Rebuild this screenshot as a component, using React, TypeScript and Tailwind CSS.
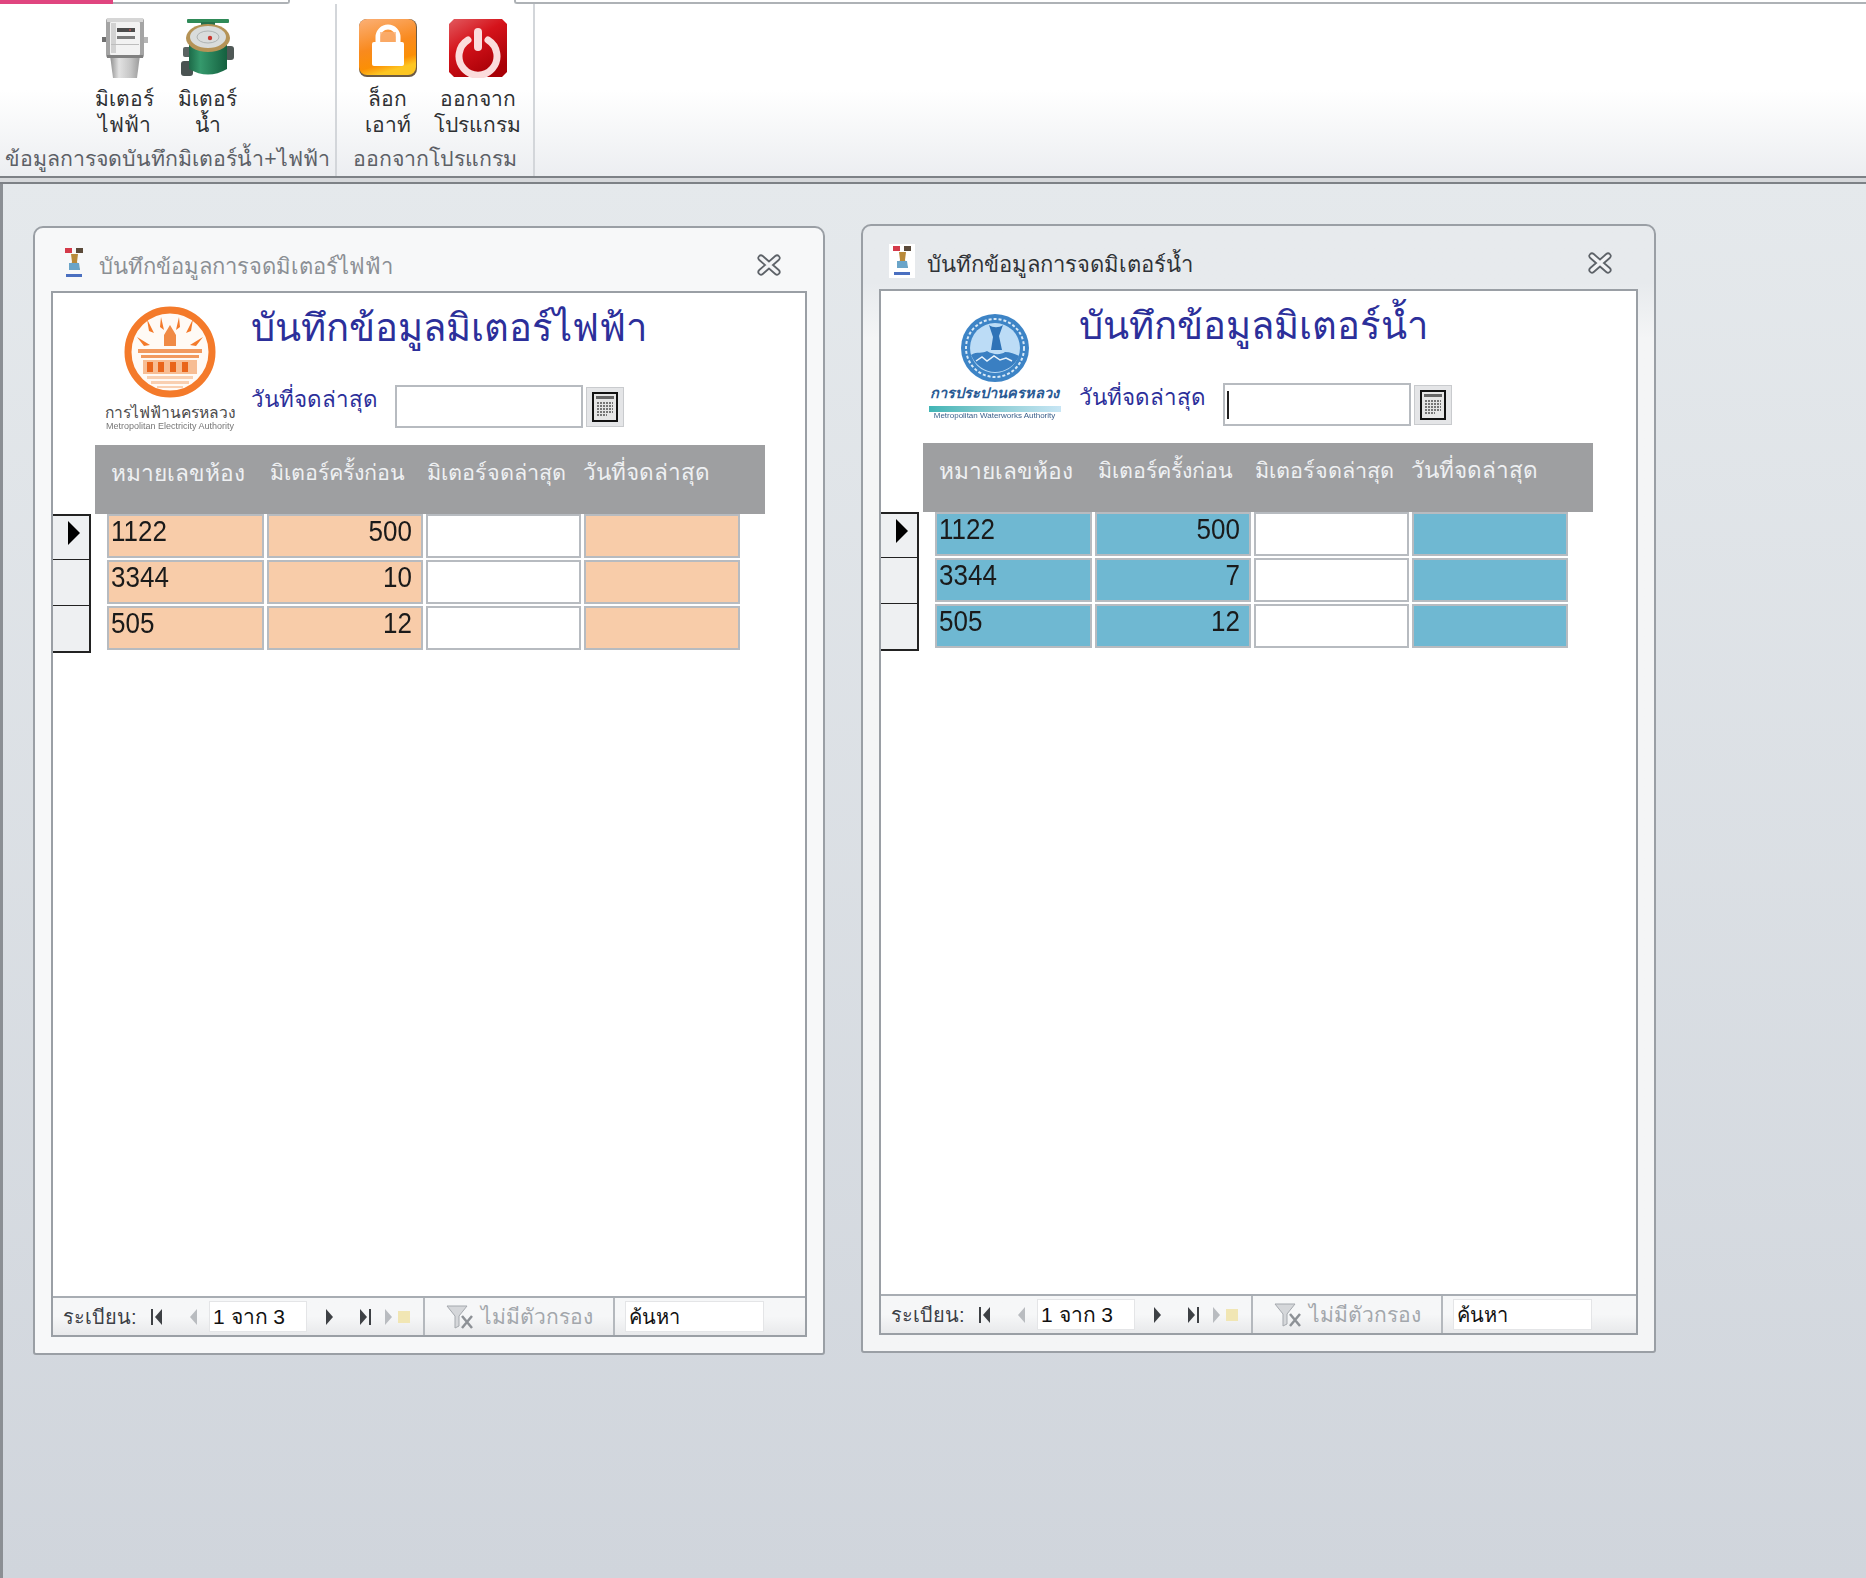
import type { ReactNode } from "react";

type MeterRow = { room: string; previous: string };

function ElectricMeterIcon() {
  return (
    <svg width="46" height="62" viewBox="0 0 46 62" className="blur-[0.7px]">
      <defs>
        <linearGradient id="meterBase" x1="0" y1="0" x2="1" y2="0">
          <stop offset="0" stopColor="#8f8f8f" />
          <stop offset="0.3" stopColor="#e2e2e2" />
          <stop offset="0.7" stopColor="#c4c4c4" />
          <stop offset="1" stopColor="#9a9a9a" />
        </linearGradient>
      </defs>
      <rect x="0" y="20" width="5" height="5" fill="#6f6f6f" />
      <rect x="41" y="20" width="5" height="6" fill="#b5b5b5" />
      <path d="M8 38h30l-3 23H11z" fill="url(#meterBase)" />
      <rect x="4" y="1" width="38" height="40" rx="3" fill="#a4a4a4" />
      <rect x="5" y="1" width="36" height="4" fill="#d6d6d6" />
      <rect x="8" y="5" width="30" height="33" rx="1" fill="#f2f2f2" />
      <rect x="9" y="6" width="5" height="30" fill="#d2d2d2" />
      <rect x="15" y="11" width="18" height="4" fill="#4c4c4c" />
      <rect x="15" y="19" width="18" height="3" fill="#7a7a7a" />
      <circle cx="28" cy="13" r="1" fill="#b55" />
      <rect x="9" y="27" width="28" height="1" fill="#bdbdbd" />
      <rect x="5" y="38" width="36" height="3" fill="#808080" />
    </svg>
  );
}

function WaterMeterIcon() {
  return (
    <svg width="54" height="60" viewBox="0 0 54 60" className="blur-[0.7px]">
      <defs>
        <linearGradient id="waterBody" x1="0" y1="0" x2="1" y2="0">
          <stop offset="0" stopColor="#1d6a48" />
          <stop offset="0.3" stopColor="#35996c" />
          <stop offset="1" stopColor="#14603f" />
        </linearGradient>
      </defs>
      <rect x="6" y="1" width="42" height="4" rx="1" fill="#2f8a58" />
      <rect x="20" y="4" width="14" height="4" fill="#26704a" />
      <rect x="0" y="43" width="12" height="15" rx="3" fill="#4a5352" />
      <rect x="44" y="28" width="9" height="14" rx="3" fill="#4f5856" />
      <rect x="2" y="29" width="8" height="10" rx="2" fill="#5b6362" />
      <path d="M8 22h38v29q-19 11-38 0z" fill="url(#waterBody)" />
      <ellipse cx="27" cy="20" rx="22" ry="14" fill="#b59356" />
      <ellipse cx="27" cy="19" rx="18" ry="11" fill="#d9dcdb" />
      <ellipse cx="27" cy="19" rx="11" ry="6" fill="none" stroke="#aeb3b2" />
      <circle cx="29" cy="20" r="2.2" fill="#c8372f" />
    </svg>
  );
}

function LockIcon() {
  return (
    <svg width="60" height="60" viewBox="0 0 60 60">
      <defs>
        <linearGradient id="lockBg" x1="0" y1="0" x2="0.3" y2="1">
          <stop offset="0" stopColor="#fbb077" />
          <stop offset="0.55" stopColor="#f98a1e" />
          <stop offset="0.85" stopColor="#fb8f05" />
          <stop offset="1" stopColor="#fdc622" />
        </linearGradient>
      </defs>
      <rect x="1" y="1" width="58" height="58" rx="8" fill="#6d5a44" />
      <rect x="1" y="1" width="57" height="56" rx="8" fill="url(#lockBg)" />
      <path d="M20 25v-6a10 10 0 0 1 20 0v6" fill="none" stroke="#fff" strokeWidth="5" />
      <rect x="14" y="24" width="32" height="24" rx="2" fill="#fff" />
      <rect x="22" y="14" width="16" height="10" fill="#f9b27a" opacity="0.75" />
    </svg>
  );
}

function PowerIcon() {
  return (
    <svg width="60" height="60" viewBox="0 0 60 60">
      <defs>
        <linearGradient id="powerBg" x1="0" y1="0" x2="0.6" y2="1">
          <stop offset="0" stopColor="#e25a5f" />
          <stop offset="0.45" stopColor="#d5131b" />
          <stop offset="1" stopColor="#a80006" />
        </linearGradient>
      </defs>
      <path d="M6 1h48l5 5v48l-5 5H6l-5-5V6z" fill="url(#powerBg)" />
      <path d="M20 22a19 19 0 1 0 20 0" fill="none" stroke="#fbdcdc" strokeWidth="7" strokeLinecap="round" />
      <rect x="26" y="10" width="8" height="23" rx="4" fill="#fbdcdc" />
    </svg>
  );
}

function RibbonButton({ icon, lines, className }: { icon: ReactNode; lines: string[]; className: string }) {
  return (
    <div className={`flex flex-col items-center ${className}`}>
      <div className="flex h-[62px] items-center justify-center">{icon}</div>
      <div className="mt-[7px] text-center text-[21px] leading-[26px] text-[#2e3033] whitespace-nowrap">
        {lines.map((line) => (
          <div key={line}>{line}</div>
        ))}
      </div>
    </div>
  );
}

function TabStrip() {
  return (
    <div className="flex h-[4px] shrink-0">
      <div className="h-full w-[113px] bg-[#e0457f]" />
      <div className="h-full w-[177px] rounded-br-[3px] border-b-2 border-r-2 border-[#aeb2b6]" />
      <div className="w-[224px]" />
      <div className="h-full flex-1 rounded-bl-[3px] border-b-2 border-l-2 border-[#aeb2b6]" />
    </div>
  );
}

function Ribbon() {
  return (
    <div className="flex h-[172px] shrink-0 bg-gradient-to-b from-white from-50% to-[#eceef1]">
      <section className="flex w-[337px] flex-col border-r-2 border-[#d3d6da]">
        <div className="flex justify-center pr-[3px] pt-[13px]">
          <RibbonButton className="w-[83px]" icon={<ElectricMeterIcon />} lines={["มิเตอร์", "ไฟฟ้า"]} />
          <RibbonButton className="w-[83px]" icon={<WaterMeterIcon />} lines={["มิเตอร์", "น้ำ"]} />
        </div>
        <div className="mt-auto pb-[3px] text-center text-[21.3px] leading-[28px] text-[#5c6066] whitespace-nowrap">
          ข้อมูลการจดบันทึกมิเตอร์น้ำ+ไฟฟ้า
        </div>
      </section>
      <section className="flex w-[198px] flex-col border-r-2 border-[#d3d6da]">
        <div className="flex justify-center pr-[5px] pt-[13px]">
          <RibbonButton className="w-[90px]" icon={<LockIcon />} lines={["ล็อก", "เอาท์"]} />
          <RibbonButton className="w-[90px]" icon={<PowerIcon />} lines={["ออกจาก", "โปรแกรม"]} />
        </div>
        <div className="mt-auto pb-[3px] text-center text-[21.3px] leading-[28px] text-[#5c6066] whitespace-nowrap">
          ออกจากโปรแกรม
        </div>
      </section>
    </div>
  );
}

function AppGlyph({ active }: { active: boolean }) {
  return (
    <div className={`flex h-[34px] w-[26px] shrink-0 items-center justify-center ${active ? "bg-white" : ""}`}>
      <svg width="22" height="32" viewBox="0 0 22 32" className="blur-[0.5px]">
        <rect x="2" y="1" width="7" height="5" fill="#d43a4a" />
        <rect x="13" y="1" width="7" height="5" fill="#5b4a3a" />
        <path d="M8 7h7l-1 8 3 8H6l3-8z" fill="#b98a3a" />
        <path d="M6 16h10l1 7H6z" fill="#6aa4c8" />
        <rect x="3" y="27" width="16" height="3" fill="#4a6fc0" />
      </svg>
    </div>
  );
}

function CloseGlyph() {
  return (
    <svg width="24" height="22" viewBox="0 0 24 22">
      <path d="M4 4l16 14M20 4L4 18" stroke="#5d6268" strokeWidth="7" strokeLinecap="round" />
      <path d="M4 4l16 14M20 4L4 18" stroke="#f2f3f5" strokeWidth="3.5" strokeLinecap="round" />
    </svg>
  );
}

function CalendarButton() {
  return (
    <div className="ml-[3px] mt-[2px] flex h-[40px] w-[38px] items-center justify-center border border-[#c9cbce] bg-[#e4e5e7]">
      <svg width="26" height="30" viewBox="0 0 26 30">
        <rect x="1" y="1" width="24" height="28" fill="#e6e6e6" stroke="#111" strokeWidth="2" />
        <rect x="4" y="4" width="18" height="3" fill="#666" />
        <path d="M5 11h16M5 14h16M5 17h16M5 20h16M5 23h10" stroke="#777" strokeWidth="2" strokeDasharray="2 1" />
      </svg>
    </div>
  );
}

function MeaLogo() {
  return (
    <div className="flex flex-col items-center">
      <svg width="94" height="94" viewBox="0 0 94 94" className="blur-[0.6px]">
        <circle cx="47" cy="47" r="42" fill="#fffaf5" stroke="#f47a2a" strokeWidth="7" />
        <path d="M24 14l7 14-5-2zM70 14l-7 14 5-2zM38 12l3 13-4-3zM56 12l-3 13 4-3zM14 32l13 8-6 1zM80 32l-13 8 6 1z" fill="#f47a2a" />
        <path d="M47 20l6 10v11H41V30z" fill="#f08a45" />
        <path d="M15 44h64v4H15zM18 50h58v3H18z" fill="#f29a5f" />
        <path d="M20 55h54v14H20z" fill="#f7bd93" />
        <path d="M24 57h6v10h-6zM35 57h6v10h-6zM47 57h6v10h-6zM59 57h6v10h-6z" fill="#e9651b" />
        <path d="M24 71h46v3H24zM28 76h38v3H28zM34 81h26v2H34z" fill="#f9cfb0" />
      </svg>
      <div className="mt-[4px] text-[15.6px] leading-[20px] text-[#4c4c4c] whitespace-nowrap">การไฟฟ้านครหลวง</div>
      <div className="-mt-[2px] text-[9px] leading-[10px] text-[#777] whitespace-nowrap blur-[0.5px]">Metropolitan Electricity Authority</div>
    </div>
  );
}

function MwaLogo() {
  return (
    <div className="mr-[7px] mt-[10px] flex flex-col items-center">
      <svg width="70" height="70" viewBox="0 0 70 70" className="blur-[0.5px]">
        <circle cx="35" cy="35" r="34" fill="#3d84c6" />
        <circle cx="35" cy="35" r="29" fill="none" stroke="#d8e9f7" strokeWidth="2" strokeDasharray="3 2" />
        <circle cx="35" cy="35" r="25" fill="#bcdcf6" />
        <path d="M29 12c4 3 10 3 14 0l-4 11 3 14H31l2-13z" fill="#2f73b7" />
        <path d="M11 42c6-4 12-1 16-4 6 4 14 4 18 1 5 0 10 2 14 4-4 10-14 16-24 16s-20-7-24-17z" fill="#3a7fc2" />
        <path d="M16 48l6-4 5 4 7-5 6 4 6-2 6 3" fill="none" stroke="#e7f2fb" strokeWidth="1.5" />
      </svg>
      <div className="text-[14.5px] font-bold italic leading-[20px] text-[#2a5a94] whitespace-nowrap">การประปานครหลวง</div>
      <div className="mt-[3px] h-[6px] w-[132px] bg-gradient-to-r from-[#3fb5b5] to-[#c8e6f5]" />
      <div className="text-[8px] leading-[8px] text-[#3a5f8a] whitespace-nowrap blur-[0.5px]">Metropolitan Waterworks Authority</div>
    </div>
  );
}

function NavTriangle({ left, dim, bar }: { left?: boolean; dim?: boolean; bar?: boolean }) {
  const color = dim ? "#b9bcc0" : "#3e4145";
  return (
    <svg width="14" height="20" viewBox="0 0 14 20" className="shrink-0">
      {left ? <path d="M11 2v16L4 10z" fill={color} /> : <path d="M3 2v16l7-8z" fill={color} />}
      {bar && <rect x={left ? 0 : 12} y="2" width="2" height="16" fill={color} />}
    </svg>
  );
}

function Footer() {
  return (
    <div className="flex h-[39px] shrink-0 items-center border-t-2 border-[#a8adb3] bg-gradient-to-b from-[#f6f7f8] from-50% to-[#e8e9eb] text-[20px]">
      <div className="flex h-full w-[372px] items-center border-r-2 border-[#b4b8bd] pl-[10px]">
        <span className="w-[88px] text-[#3c4046] whitespace-nowrap">ระเบียน:</span>
        <NavTriangle left bar />
        <span className="w-[21px]" />
        <NavTriangle left dim />
        <div className="ml-[9px] flex h-[31px] w-[98px] items-center border border-[#e4e5e7] bg-white pl-[3px] text-[21px] text-[#111] whitespace-nowrap">1 จาก 3</div>
        <span className="w-[16px]" />
        <NavTriangle />
        <span className="w-[20px]" />
        <NavTriangle bar />
        <span className="w-[11px]" />
        <NavTriangle dim />
        <span className="ml-[2px] h-[12px] w-[12px] bg-[#f1e6b4]" />
      </div>
      <div className="flex h-full w-[190px] items-center border-r-2 border-[#b4b8bd] pl-[21px]">
        <svg width="30" height="26" viewBox="0 0 30 26" className="shrink-0">
          <path d="M1 2h20l-8 10v10l-4 2V12z" fill="#d5d7da" stroke="#a5a9ae" />
          <path d="M16 12l10 12M26 12L16 24" stroke="#8d9196" strokeWidth="2.5" />
        </svg>
        <span className="ml-[5px] text-[21px] text-[#a3a7ac] whitespace-nowrap">ไม่มีตัวกรอง</span>
      </div>
      <div className="ml-[10px] flex h-[31px] w-[139px] items-center border border-[#e4e5e7] bg-white pl-[3px] text-[#111] whitespace-nowrap">ค้นหา</div>
    </div>
  );
}

function MeterWindow(props: {
  title: string;
  heading: string;
  rows: MeterRow[];
  active: boolean;
  cellClass: string;
  logo: ReactNode;
  className: string;
}) {
  const { title, heading, rows, active, cellClass, logo, className } = props;
  const cell = "flex h-[44px] items-center border-2 border-[#b7bbc0] text-[26px] leading-[28px] text-[#1a1a1a] pl-[2px] pb-[10px]";
  const cellText = "inline-block scale-y-[1.12]";
  return (
    <div className={`flex h-[1129px] flex-col rounded-t-[10px] rounded-b-[3px] border-2 border-[#9a9fa5] ${active ? "bg-gradient-to-b from-[#e7eaed] from-5% to-[#f4f5f6] to-10%" : "bg-[#f7f8f9]"} ${className}`}>
      <div className="flex h-[63px] shrink-0 items-center pl-[26px] pr-[42px] pt-[6px]">
        <AppGlyph active={active} />
        <span className={`ml-[12px] mt-[7px] text-[22px] whitespace-nowrap ${active ? "text-[#2f3236]" : "text-[#8b8f94]"}`}>{title}</span>
        <span className="ml-auto mt-[5px]"><CloseGlyph /></span>
      </div>
      <div className="mx-[16px] mb-[16px] flex min-h-0 flex-1 flex-col border-2 border-[#9a9fa5] bg-white">
        <div className="flex h-[152px] shrink-0">
          <div className="flex w-[198px] shrink-0 justify-center pl-[36px] pt-[12px]">{logo}</div>
          <div className="flex flex-col">
            <div className="mt-[4px] h-[62px] text-[38.2px] leading-[62px] text-[#2c2f9a] whitespace-nowrap">{heading}</div>
            <div className="mt-[26px] flex items-start">
              <span className="-mt-[2px] w-[144px] text-[22.4px] text-[#2c2f9a] whitespace-nowrap">วันที่จดล่าสุด</span>
              <div className="flex h-[43px] w-[188px] items-center border-2 border-[#b7bbc0] bg-white pl-[2px]">
                {active && <span className="h-[28px] w-[2px] bg-[#222]" />}
              </div>
              <CalendarButton />
            </div>
          </div>
        </div>
        <div className="ml-[42px] flex h-[69px] w-[670px] shrink-0 items-start bg-[#9e9fa1] pl-[16px] pt-[11px] text-[#eef0f2]">
          <span className="w-[159px] text-[22.7px] whitespace-nowrap">หมายเลขห้อง</span>
          <span className="w-[157px] text-[21.4px] leading-[34px] whitespace-nowrap">มิเตอร์ครั้งก่อน</span>
          <span className="w-[156px] text-[21.6px] leading-[34px] whitespace-nowrap">มิเตอร์จดล่าสุด</span>
          <span className="text-[22.5px] whitespace-nowrap">วันที่จดล่าสุด</span>
        </div>
        <div className="flex flex-col">
          {rows.map((row, i) => (
            <div key={row.room} className="flex h-[46px]">
              <div className={`flex h-[47px] w-[38px] shrink-0 items-center justify-center border-2 border-l-0 border-[#222] bg-[#eef0f2] pb-[10px] pl-[6px] ${i > 0 ? "border-t-0" : ""}`}>
                {i === 0 && (
                  <svg width="14" height="26" viewBox="0 0 14 26">
                    <path d="M1 1v24l12-12z" fill="#000" />
                  </svg>
                )}
              </div>
              <div className="ml-[16px] flex items-start gap-[3px]">
                <div className={`${cell} w-[157px] ${cellClass}`}><span className={cellText}>{row.room}</span></div>
                <div className={`${cell} w-[156px] justify-end pr-[9px] ${cellClass}`}><span className={cellText}>{row.previous}</span></div>
                <div className={`${cell} w-[155px] bg-white`} />
                <div className={`${cell} w-[156px] ${cellClass}`} />
              </div>
            </div>
          ))}
        </div>
        <div className="flex-1" />
        <Footer />
      </div>
    </div>
  );
}

const ELECTRIC_ROWS: MeterRow[] = [
  { room: "1122", previous: "500" },
  { room: "3344", previous: "10" },
  { room: "505", previous: "12" },
];

const WATER_ROWS: MeterRow[] = [
  { room: "1122", previous: "500" },
  { room: "3344", previous: "7" },
  { room: "505", previous: "12" },
];

export default function App() {
  return (
    <div className="flex h-[1578px] w-[1866px] flex-col overflow-hidden bg-white font-['Liberation_Sans','Noto_Sans',sans-serif]">
      <TabStrip />
      <Ribbon />
      <div className="h-[8px] shrink-0 border-y-2 border-y-[#7d8186] bg-[#d6d8db]" />
      <main className="flex min-h-0 flex-1 items-start gap-[36px] border-l-[3px] border-[#8b8f94] bg-gradient-to-b from-[#e5e9ec] to-[#d0d5dc] pl-[30px] pt-[40px]">
        <MeterWindow
          className="mt-[2px] w-[792px]"
          title="บันทึกข้อมูลการจดมิเตอร์ไฟฟ้า"
          heading="บันทึกข้อมูลมิเตอร์ไฟฟ้า"
          rows={ELECTRIC_ROWS}
          active={false}
          cellClass="bg-[#f8cca9]"
          logo={<MeaLogo />}
        />
        <MeterWindow
          className="w-[795px]"
          title="บันทึกข้อมูลการจดมิเตอร์น้ำ"
          heading="บันทึกข้อมูลมิเตอร์น้ำ"
          rows={WATER_ROWS}
          active
          cellClass="bg-[#6fb8d2]"
          logo={<MwaLogo />}
        />
      </main>
    </div>
  );
}
